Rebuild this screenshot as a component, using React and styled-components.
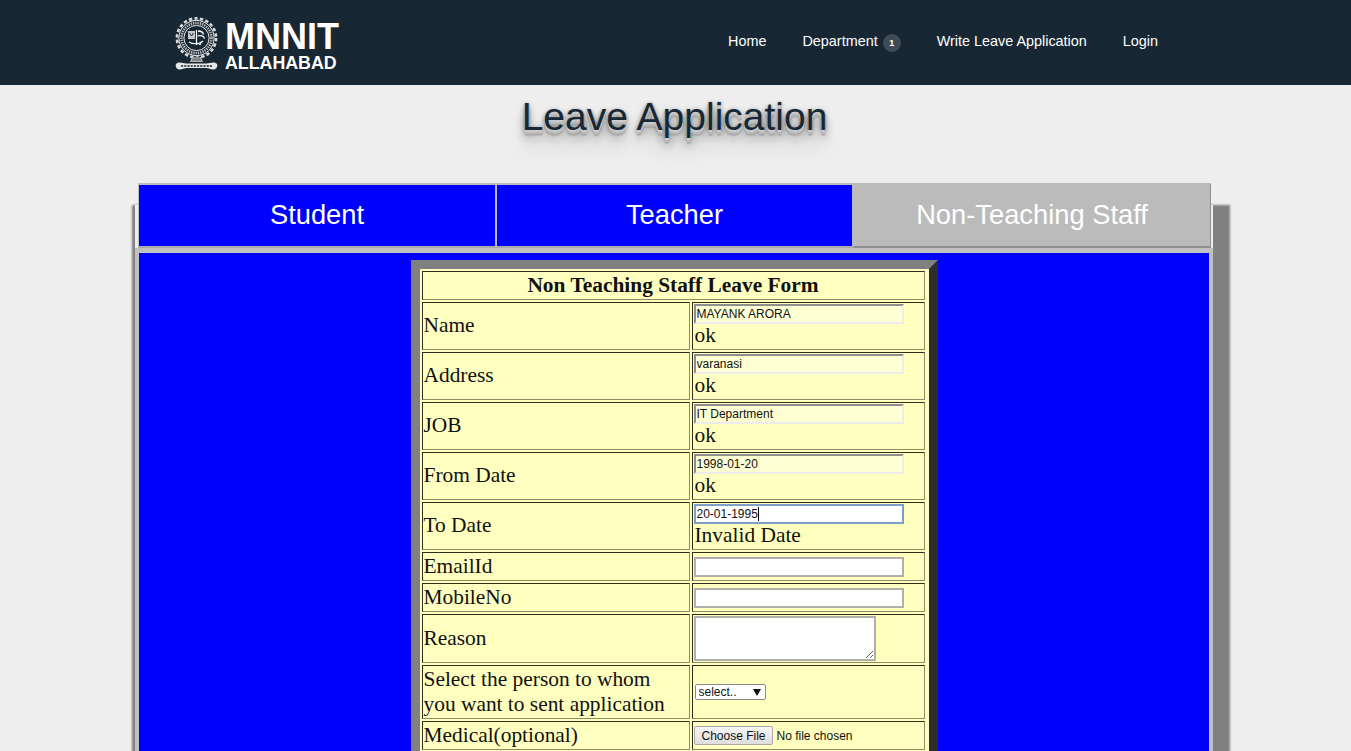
import React from 'react';
import styled, { createGlobalStyle } from 'styled-components';

const GlobalStyle = createGlobalStyle`
  html, body {
    margin: 0;
    padding: 0;
    height: 100%;
    overflow: hidden;
    background-color: #eeeeee;
    font-family: "Liberation Sans", Arial, sans-serif;
  }
`;

const Page = styled.div`
  height: 751px;
  overflow: hidden;
`;

const Header = styled.header`
  height: 85px;
  background-color: #172733;
  display: flex;
  align-items: flex-start;
  justify-content: space-between;
  padding: 0 193px 0 175px;
`;

const Logo = styled.div`
  display: flex;
  align-items: flex-start;
  gap: 7px;
  padding-top: 17px;
  color: #fff;
`;

const LogoText = styled.div`
  display: flex;
  flex-direction: column;
  font-weight: bold;
  margin-top: 3px;
`;

const LogoTitle = styled.span`
  font-size: 36px;
  line-height: 34px;
`;

const LogoSub = styled.span`
  font-size: 17.8px;
  line-height: 18px;
`;

const Nav = styled.nav`
  display: flex;
  align-items: center;
  gap: 36px;
  height: 82px;
`;

const NavLink = styled.a`
  color: #fff;
  font-size: 14.4px;
  display: flex;
  align-items: center;
`;

const Badge = styled.span`
  width: 18px;
  height: 18px;
  border-radius: 50%;
  background-color: #3f4c55;
  color: #fff;
  font-size: 9px;
  font-weight: bold;
  display: flex;
  align-items: center;
  justify-content: center;
  margin: 3px 0 0 5px;
`;

const Title = styled.h1`
  margin: 9px 0 0;
  padding-right: 2px;
  text-align: center;
  font-size: 39px;
  line-height: 45px;
  font-weight: normal;
  color: #172733;
  text-shadow: 0 1px 0 #ccc, 0 2px 0 #c9c9c9, 0 3px 0 #bbb, 0 4px 0 #b9b9b9,
    0 5px 0 #aaa, 0 6px 1px rgba(0, 0, 0, 0.1), 0 0 5px rgba(0, 0, 0, 0.1),
    0 1px 3px rgba(0, 0, 0, 0.3), 0 3px 5px rgba(0, 0, 0, 0.2),
    0 5px 10px rgba(0, 0, 0, 0.25), 0 10px 10px rgba(0, 0, 0, 0.2),
    0 20px 20px rgba(0, 0, 0, 0.15);
`;

const Card = styled.section`
  display: flow-root;
  width: 1078px;
  margin: 66px 0 0 135px;
  background-color: #eeeeee;
  box-shadow: 7px 10px 2px 10px #808080;
`;

const Tabs = styled.div`
  display: grid;
  grid-template-columns: 358px 357px 358px;
  margin: -22px 0 0 3px;
  height: 65px;
`;

const Tab = styled.div`
  background-color: ${({ active }) => (active ? '#bbbbbb' : '#0000ff')};
  color: #ffffff;
  border: 2px solid #bcbcbc;
  border-left-width: 1px;
  border-right-width: 1px;
  border-right-color: ${({ active }) => (active ? '#8f8f8f' : '#b8b8b8')};
  border-bottom-color: ${({ active }) => (active ? '#8f8f8f' : '#aaaaaa')};
  font-size: 27.3px;
  padding-bottom: 2px;
  display: flex;
  align-items: center;
  justify-content: center;
  box-sizing: border-box;
`;

const Content = styled.div`
  background-color: #0000ff;
  border: 4px solid #c0c0c0;
  border-top-width: 5px;
  padding-top: 7px;
  height: 600px;
  display: flex;
  justify-content: center;
`;

const FormTable = styled.table`
  width: 527px;
  height: fit-content;
  table-layout: fixed;
  border-collapse: separate;
  border-spacing: 2px;
  border: 9px solid;
  border-color: #808080 #2d2d2d #2d2d2d #808080;
  padding-right: 2px;
  background-color: #ffffc0;
  font-family: "Liberation Serif", "Times New Roman", serif;
  font-size: 21.4px;
  color: #111;
`;

const Cell = styled.td`
  padding: 1px;
  ${({ tall }) => tall && 'padding-bottom: 3px;'}
  border: 1px solid;
  border-color: #2f2f1c #8c8c66 #8c8c66 #2f2f1c;
  line-height: 25px;
  vertical-align: middle;
`;

const HeadCell = styled(Cell)`
  text-align: center;
  font-weight: bold;
  line-height: 25px;
`;

const TextInput = styled.input`
  display: block;
  box-sizing: border-box;
  width: 210px;
  height: 20px;
  margin: 0;
  padding: 1px 1px;
  font-family: "Liberation Sans", Arial, sans-serif;
  font-size: 12px;
  color: #111;
  outline: none;
  border: 2px solid #b0b0a8;
  background-color: #fff;
  ${({ filled }) =>
    filled &&
    `
    background-color: #ffffd4;
    border-color: #8f8f8f #ececec #ececec #8f8f8f;
  `}
  ${({ focused }) =>
    focused &&
    `
    border-color: #7d9fc9;
    caret-color: transparent;
  `}
`;

const Status = styled.div`
  line-height: 24px;
  margin: -1px 0 1px;
  padding-left: 1px;
`;

const InputWrap = styled.div`
  position: relative;
`;

const Caret = styled.span`
  position: absolute;
  left: 64px;
  top: 3px;
  width: 1px;
  height: 14px;
  background-color: #000;
`;

const ReasonBox = styled.textarea`
  display: block;
  box-sizing: border-box;
  width: 182px;
  height: 45px;
  margin: 0;
  border: 2px solid #b0b0a8;
  background-color: #fff;
`;

const SelectWrap = styled.div`
  position: relative;
  width: 71px;
  margin-left: 1px;
`;

const PersonSelect = styled.select`
  display: block;
  appearance: none;
  box-sizing: border-box;
  width: 71px;
  height: 16px;
  margin: 0;
  padding: 0 0 0 3px;
  font-family: "Liberation Sans", Arial, sans-serif;
  font-size: 12px;
  color: #111;
  background-color: #fff;
  border: 1px solid #8a8a8a;
  border-radius: 2px;
`;

const SelectArrow = styled.svg`
  position: absolute;
  right: 5px;
  top: 5px;
  width: 8px;
  height: 7px;
  pointer-events: none;
`;

const FileInput = styled.input`
  display: block;
  font-family: "Liberation Sans", Arial, sans-serif;
  font-size: 12px;
  color: #111;
  width: 228px;

  &::file-selector-button {
    font-family: "Liberation Sans", Arial, sans-serif;
    font-size: 12px;
    height: 19px;
    width: 79px;
    padding: 0 0 0 1px;
    margin-right: 4px;
    color: #111;
    border: 1px solid #aaaaaa;
    border-radius: 2px;
    background: linear-gradient(#f6f6f6, #dedede);
  }
`;

const Emblem = () => (
  <svg width="43" height="55" viewBox="0 0 43 55" fill="none">
    {/* gear rim */}
    <circle cx="21.5" cy="21" r="19.6" stroke="#d9d9d9" strokeWidth="2.6" strokeDasharray="3.4 2.2" />
    <circle cx="21.5" cy="21" r="17.6" stroke="#f2f2f2" strokeWidth="1" />
    <circle cx="21.5" cy="21" r="15" stroke="#c4c4c4" strokeWidth="2.6" strokeDasharray="1.3 1" />
    <circle cx="21.5" cy="21" r="12.6" stroke="#fff" strokeWidth="0.9" />
    {/* crest */}
    <rect x="13" y="14" width="7" height="8" fill="#c9c9c9" />
    <path d="M14.500 16l2 3 2-3" stroke="#172733" strokeWidth="1" />
    <path d="M23 14c3 0 5 1 5.500 3.500M22.500 19c3-1 6.500 0 7 2.500" stroke="#fff" strokeWidth="1.300" />
    <path d="M21.500 13v15M14 25c3 2 10 3 14-1" stroke="#fff" strokeWidth="1.200" />
    <circle cx="25" cy="27" r="1.200" fill="#ddd" />
    {/* stand and ribbon */}
    <path d="M17 40h9l2 5H15z" fill="#b8b8b8" />
    <path d="M18 41h7M17 43h9" stroke="#172733" strokeWidth="0.7" />
    <path d="M1 47c3-3 7-1 10-.500h21c3-.500 7-2.500 10 .500 1 2.500-.500 5-3 5.500-3 .500-5-1.500-8-1.500H12c-3 0-5 2-8 1.500-2.500-.500-4-3-3-5.500z" fill="#e6e6e6" />
    <path d="M6 49h31" stroke="#172733" strokeWidth="1.400" strokeDasharray="2.200 1" />
  </svg>
);

const filledRows = [
  ['Name', 'MAYANK ARORA'],
  ['Address', 'varanasi'],
  ['JOB', 'IT Department'],
  ['From Date', '1998-01-20'],
];

export default function App() {
  return (
    <Page>
      <GlobalStyle />
      <Header>
        <Logo>
          <Emblem />
          <LogoText>
            <LogoTitle>MNNIT</LogoTitle>
            <LogoSub>ALLAHABAD</LogoSub>
          </LogoText>
        </Logo>
        <Nav>
          <NavLink>Home</NavLink>
          <NavLink>
            Department<Badge>1</Badge>
          </NavLink>
          <NavLink>Write Leave Application</NavLink>
          <NavLink>Login</NavLink>
        </Nav>
      </Header>
      <Title>Leave Application</Title>
      <Card>
        <Tabs>
          <Tab>Student</Tab>
          <Tab>Teacher</Tab>
          <Tab active>Non-Teaching Staff</Tab>
        </Tabs>
        <Content>
          <FormTable>
            <colgroup>
              <col style={{ width: '268px' }} />
              <col style={{ width: '233px' }} />
            </colgroup>
            <tbody>
              <tr>
                <HeadCell colSpan={2}>Non Teaching Staff Leave Form</HeadCell>
              </tr>
              {filledRows.map(([label, value]) => (
                <tr key={label}>
                  <Cell tall>{label}</Cell>
                  <Cell>
                    <TextInput filled readOnly defaultValue={value} />
                    <Status>ok</Status>
                  </Cell>
                </tr>
              ))}
              <tr>
                <Cell tall>To Date</Cell>
                <Cell>
                  <InputWrap>
                    <TextInput focused readOnly defaultValue="20-01-1995" />
                    <Caret />
                  </InputWrap>
                  <Status>Invalid Date</Status>
                </Cell>
              </tr>
              <tr>
                <Cell>EmailId</Cell>
                <Cell>
                  <TextInput />
                </Cell>
              </tr>
              <tr>
                <Cell>MobileNo</Cell>
                <Cell>
                  <TextInput />
                </Cell>
              </tr>
              <tr>
                <Cell>Reason</Cell>
                <Cell>
                  <ReasonBox />
                </Cell>
              </tr>
              <tr>
                <Cell>
                  Select the person to whom
                  <br />
                  you want to sent application
                </Cell>
                <Cell>
                  <SelectWrap>
                    <PersonSelect>
                      <option>select..</option>
                    </PersonSelect>
                    <SelectArrow viewBox="0 0 8 7">
                      <path d="M0 0h8L4 7z" fill="#111" />
                    </SelectArrow>
                  </SelectWrap>
                </Cell>
              </tr>
              <tr>
                <Cell>Medical(optional)</Cell>
                <Cell>
                  <FileInput type="file" />
                </Cell>
              </tr>
            </tbody>
          </FormTable>
        </Content>
      </Card>
    </Page>
  );
}
